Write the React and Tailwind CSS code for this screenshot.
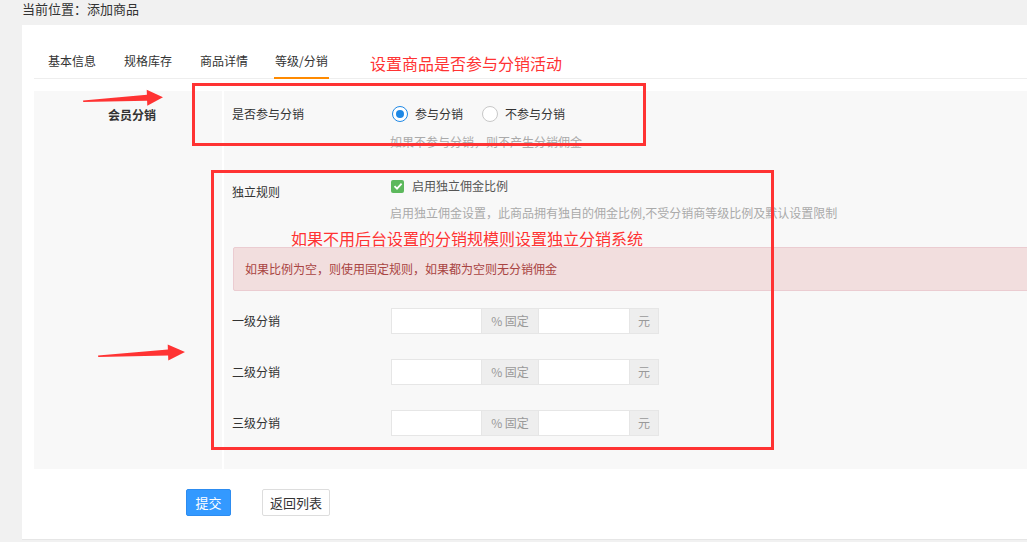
import { useState } from "react";

const levels = ["一级分销", "二级分销", "三级分销"];

function Arrow({ className, tail, tip, base }) {
  // thin tail widening into a solid head
  return (
    <svg className={className} width="110" height="24" viewBox="0 0 110 24">
      <polygon points={`0,${tail} ${base},${12 - 3} ${base},${12 - 8} ${tip},12 ${base},${12 + 8} ${base},${12 + 3} 0,${tail + 1.5}`} fill="#ff3333" />
    </svg>
  );
}

export default function App() {
  const [join, setJoin] = useState(true);
  const [own, setOwn] = useState(true);

  return (
    <div
      className="relative w-[1027px] h-[542px] overflow-hidden bg-[#f1f1f1] text-[#333]"
      style={{ fontFamily: '"Microsoft YaHei", "Noto Sans CJK SC", "Noto Sans", sans-serif' }}
    >
      {/* breadcrumb */}
      <div className="h-[25px] pl-[22px] text-[13px] leading-[17px]">当前位置：添加商品</div>

      {/* card */}
      <div className="ml-[22px] h-[515px] bg-white border-b border-[#e6e6e6] overflow-hidden">
        {/* tabs */}
        <div className="ml-[12px] h-[54px] flex items-end border-b border-[#eeeeee]">
          {["基本信息", "规格库存", "商品详情", "等级/分销"].map((t, i) => (
            <div key={t} className={i === 3 ? "pl-[12px] pr-[14px]" : "px-[14px]"}>
              <div
                className={
                  "text-[12px] leading-[18px] pb-[7px] border-b-2 -mb-px " +
                  (i === 3 ? "border-[#ff8a00] px-[1px]" : "border-transparent")
                }
              >
                {t}
              </div>
            </div>
          ))}
        </div>

        {/* form */}
        <div className="ml-[12px] mt-[12px] h-[378px] flex overflow-hidden">
          <div className="w-[188px] bg-[#f8f8f8] pt-[15px] pr-[66px] text-right text-[12px] leading-[18px] font-bold">
            会员分销
          </div>
          <div className="ml-[2px] flex-1 bg-[#f8f8f8] pl-[8px] pt-[13px] text-[12px]">
            {/* row 1 */}
            <div className="flex">
              <div className="w-[158px] leading-[20px]">是否参与分销</div>
              <div>
                <div className="flex items-center h-[20px]">
                  <button onClick={() => setJoin(true)} className="ml-[2px] flex items-center">
                    <span className={"w-[16px] h-[16px] rounded-full border flex items-center justify-center bg-white " + (join ? "border-[#1e88e5]" : "border-[#c8c8c8]")}>
                      {join && <span className="w-[8px] h-[8px] rounded-full bg-[#1e88e5]" />}
                    </span>
                    <span className="ml-[7px]">参与分销</span>
                  </button>
                  <button onClick={() => setJoin(false)} className="ml-[19px] flex items-center">
                    <span className={"w-[16px] h-[16px] rounded-full border flex items-center justify-center bg-white " + (!join ? "border-[#1e88e5]" : "border-[#c8c8c8]")}>
                      {!join && <span className="w-[8px] h-[8px] rounded-full bg-[#1e88e5]" />}
                    </span>
                    <span className="ml-[7px]">不参与分销</span>
                  </button>
                </div>
                <div className="mt-[9px] leading-[18px] text-[#aaaaaa]">如果不参与分销，则不产生分销佣金</div>
              </div>
            </div>

            {/* row 2 */}
            <div className="flex mt-[25px]">
              <div className="w-[158px] mt-[6px] leading-[20px]">独立规则</div>
              <div>
                <button onClick={() => setOwn(!own)} className="flex items-center h-[20px] ml-[1px]">
                  <span className={"w-[13px] h-[13px] rounded-[2px] flex items-center justify-center " + (own ? "bg-[#5cb85c]" : "bg-white border border-[#ccc]")}>
                    {own && (
                      <svg width="10" height="10" viewBox="0 0 10 10">
                        <path d="M1.5 5.2 L4 7.6 L8.6 2.6" stroke="white" strokeWidth="1.8" fill="none" />
                      </svg>
                    )}
                  </span>
                  <span className="ml-[8px] text-[#555]">启用独立佣金比例</span>
                </button>
                <div className="mt-[8px] leading-[18px] text-[#aaaaaa]">
                  启用独立佣金设置，此商品拥有独自的佣金比例,不受分销商等级比例及默认设置限制
                </div>
              </div>
            </div>

            {/* alert */}
            <div className="mt-[25px] ml-[1px] -mr-[3px] h-[44px] flex items-center pl-[11px] bg-[#f2dede] border border-[#ebccd1] text-[#a94442] rounded-[2px]">
              如果比例为空，则使用固定规则，如果都为空则无分销佣金
            </div>

            {/* levels */}
            <div className="mt-[17px] flex flex-col gap-[25px]">
              {levels.map((l) => (
                <div key={l} className="flex items-center h-[26px]">
                  <div className="w-[159px]">{l}</div>
                  <div className="flex h-[26px]">
                    <input className="w-[91px] h-full bg-white border border-[#e6e6e6] outline-none px-2" />
                    <span className="w-[56px] h-full flex items-center justify-center bg-[#eeeeee] border-y border-[#e6e6e6] text-[#999]">% 固定</span>
                    <input className="w-[92px] h-full bg-white border border-[#e6e6e6] outline-none px-2" />
                    <span className="w-[29px] h-full flex items-center justify-center bg-[#eeeeee] border border-l-0 border-[#e6e6e6] text-[#999]">元</span>
                  </div>
                </div>
              ))}
            </div>
          </div>
        </div>

        {/* buttons */}
        <div className="mt-[20px] ml-[164px] flex gap-[31px] text-[13px]">
          <button className="w-[45px] h-[27px] rounded-[2px] bg-[#3399ff] border border-[#2d8cf0] text-white">提交</button>
          <button className="w-[68px] h-[27px] rounded-[2px] bg-white border border-[#dddddd] text-[#333]">返回列表</button>
        </div>
      </div>

      {/* annotations */}
      <div className="absolute left-[370px] top-[53px] text-[16px] leading-[20px] text-[#ff3333]">设置商品是否参与分销活动</div>
      <div className="absolute left-[291px] top-[228px] text-[16px] leading-[20px] text-[#ff3333]">如果不用后台设置的分销规模则设置独立分销系统</div>
      <div className="absolute left-[192px] top-[83px] w-[454px] h-[63px] border-[3px] border-[#ff3333]" />
      <div className="absolute left-[211px] top-[170px] w-[563px] h-[280px] border-[3px] border-[#ff3333]" />
      <Arrow className="absolute left-[83px] top-[86px] -rotate-[2deg]" tail={12.5} base={64} tip={80} />
      <Arrow className="absolute left-[98px] top-[341px] -rotate-[2deg]" tail={12.5} base={70} tip={87} />
    </div>
  );
}
